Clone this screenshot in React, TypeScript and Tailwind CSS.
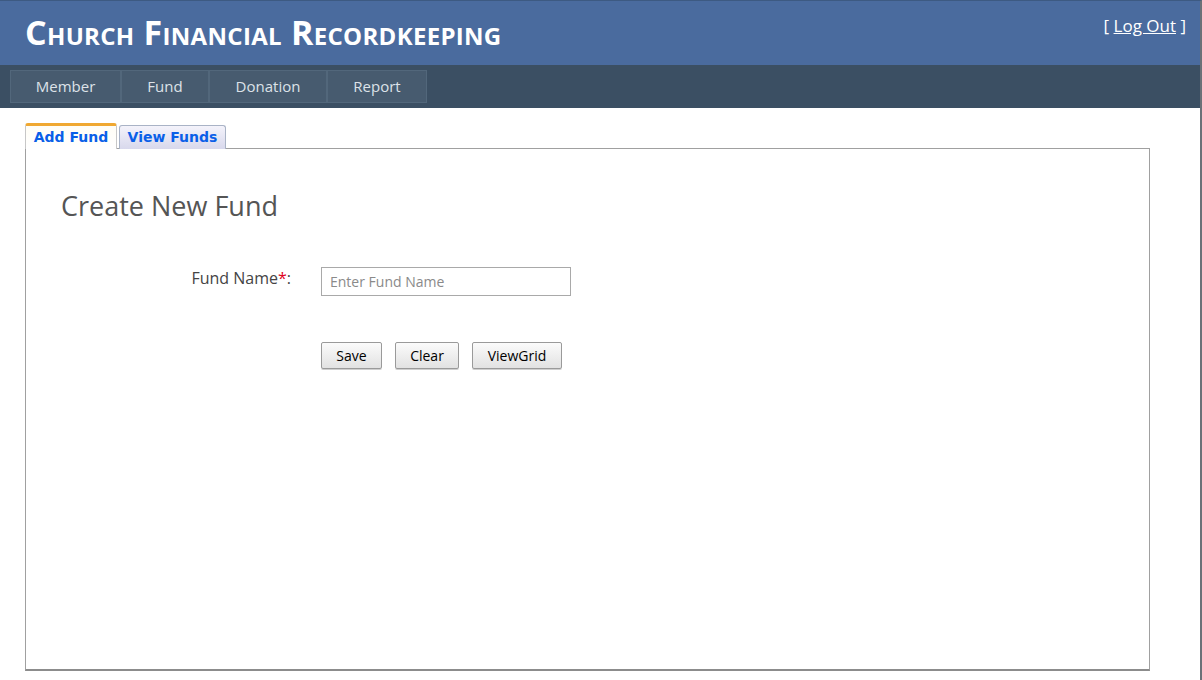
export default function App() {
  const navItems = [
    { label: 'Member', w: 'w-[111px]' },
    { label: 'Fund', w: 'w-[88px]' },
    { label: 'Donation', w: 'w-[118px]' },
    { label: 'Report', w: 'w-[100px]' },
  ]

  const buttons = [
    { label: 'Save', w: 'w-[61px]' },
    { label: 'Clear', w: 'w-[64px]' },
    { label: 'ViewGrid', w: 'w-[90px]' },
  ]

  return (
    <div className="h-[680px] w-[1202px] bg-white font-['Open_Sans',sans-serif] border-r-2 border-r-[#6b7178] border-t border-t-[#3d5a82] overflow-hidden">
      {/* Header */}
      <div className="h-[64px] bg-[#4a6b9e] flex items-start justify-between pl-[25px] pr-[14px]">
        <h1 className="mt-[9px] text-[34px] leading-[44px] font-bold text-white [font-variant:small-caps] tracking-[0.3px]">
          Church Financial Recordkeeping
        </h1>
        <div className="mt-[13px] text-[17px] text-white leading-[24px]">
          [ <a className="underline">Log Out</a> ]
        </div>
      </div>

      {/* Nav */}
      <div className="h-[43px] bg-[#3b4f63] flex items-start pl-[10px] pt-[5px]">
        {navItems.map(item => (
          <div
            key={item.label}
            className={`${item.w} h-[33px] bg-[#475b6f] border border-[#52677b] flex items-center justify-center text-[15px] text-[#dde2e8]`}
          >
            {item.label}
          </div>
        ))}
      </div>

      {/* Tabs */}
      <div className="pl-[25px] pt-[15px]">
        <div className="flex items-end gap-[2px] h-[26px] font-['DejaVu_Sans',sans-serif] text-[14px] font-bold">
          <div className="h-[26px] w-[92px] bg-gradient-to-b from-[#fffdf5] to-white border border-[#c7c7c7] border-b-0 border-t-[3px] border-t-[#f0a830] rounded-t-[3px] flex items-center justify-center text-[#0a5fe8]">
            Add Fund
          </div>
          <div className="h-[24px] w-[107px] bg-gradient-to-b from-[#f4f3fb] to-[#d8d8ec] border border-[#a9b3c6] border-b-0 rounded-t-[3px] flex items-center justify-center text-[#0a5fe8]">
            View Funds
          </div>
        </div>

        {/* Panel */}
        <div className="w-[1125px] h-[523px] border border-[#a0a0a0] border-b-2 border-b-[#8c8c8c] -mt-px">
          <h2 className="ml-[35px] mt-[39px] text-[27px] leading-[36px] text-[#555555]">Create New Fund</h2>

          <div className="flex items-start mt-[43px]">
            <div className="w-[265px] text-right text-[16px] text-[#444444] leading-[24px] -mt-px">
              Fund Name<span className="text-[#e0001b]">*</span>:
            </div>
            <input
              placeholder="Enter Fund Name"
              className="ml-[30px] w-[250px] h-[29px] border border-[#a9a9a9] px-[8px] text-[14px] placeholder:text-[#8a8a8a] outline-none"
            />
          </div>

          <div className="flex gap-[13px] ml-[295px] mt-[46px]">
            {buttons.map(b => (
              <button
                key={b.label}
                className={`${b.w} h-[27px] text-[14px] text-black bg-gradient-to-b from-[#fbfbfb] to-[#e2e2e2] border border-[#9a9a9a] rounded-[2px] shadow-[0_1px_0_#cfcfcf]`}
              >
                {b.label}
              </button>
            ))}
          </div>
        </div>
      </div>
    </div>
  )
}
